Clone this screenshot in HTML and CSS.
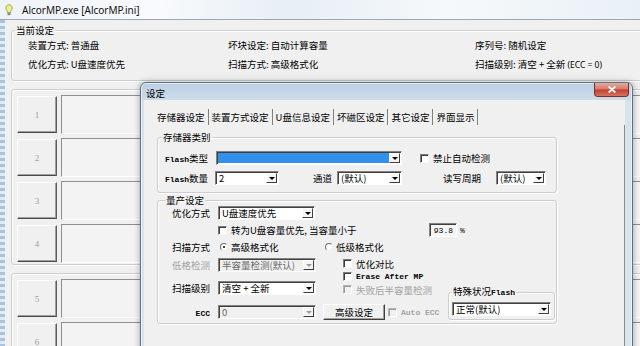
FILE: index.html
```html
<!DOCTYPE html>
<html lang="zh-CN">
<head>
<meta charset="utf-8">
<title>AlcorMP.exe [AlcorMP.ini]</title>
<link rel="stylesheet" href="styles.css">
</head>
<body>
<div class="screen">
  <div class="app">
    <div class="app-title">
      <svg class="bulb" width="8" height="12" viewBox="0 0 8 12" aria-hidden="true">
        <path d="M4 0.8C2 0.8 0.8 2.3 0.8 4c0 1.4 0.9 2.2 1.5 3.2V8.5h3.4V7.2C6.3 6.2 7.2 5.4 7.2 4 7.2 2.3 6 0.8 4 0.8z" fill="#f2ef86" stroke="#8a9a3a" stroke-width="0.8"/>
        <rect x="2.5" y="9" width="3" height="2.2" fill="#7d8a94"/>
      </svg>
      <span class="app-name">AlcorMP.exe [AlcorMP.ini]</span>
    </div>
    <div class="app-body">
      <div class="app-frame"></div>
      <div class="app-client">
        <fieldset class="group current">
          <legend>当前设定</legend>
          <div class="info-grid">
            <span>装置方式: 普通盘</span>
            <span>坏块设定: 自动计算容量</span>
            <span>序列号: 随机设定</span>
            <span>优化方式: U盘速度优先</span>
            <span>扫描方式: 高级格式化</span>
            <span>扫描级别: 清空 + 全新 <span class="latin-s">(ECC = 0)</span></span>
          </div>
        </fieldset>
        <div class="slot-group">
          <div class="slot"><div class="slot-btn">1</div><div class="slot-panel"></div></div>
          <div class="slot"><div class="slot-btn">2</div><div class="slot-panel"></div></div>
          <div class="slot"><div class="slot-btn">3</div><div class="slot-panel"></div></div>
          <div class="slot"><div class="slot-btn">4</div><div class="slot-panel"></div></div>
        </div>
        <div class="slot-group">
          <div class="slot"><div class="slot-btn">5</div><div class="slot-panel"></div></div>
          <div class="slot"><div class="slot-btn">6</div><div class="slot-panel"></div></div>
        </div>
      </div>
    </div>
  </div>

  <div class="dialog">
    <div class="dlg-title">
      <span class="dlg-name">设定</span>
      <div class="close"><svg width="8" height="7" viewBox="0 0 8 7" aria-hidden="true"><path d="M1.2 1L6.8 6M6.8 1L1.2 6" stroke="#fff" stroke-width="1.7" stroke-linecap="round"/></svg></div>
    </div>
    <div class="dlg-client">
      <div class="tabs">
        <span class="tab">存储器设定</span>
        <span class="tab">装置方式设定</span>
        <span class="tab">U盘信息设定</span>
        <span class="tab">坏磁区设定</span>
        <span class="tab">其它设定</span>
        <span class="tab">界面显示</span>
      </div>
      <div class="tab-page">
        <fieldset class="group mem">
          <legend>存储器类别</legend>
          <div class="mem-body">
            <div class="row">
              <span class="lbl w51"><span class="mono">Flash</span>类型</span>
              <div class="combo w186 sel"><span class="combo-text"></span><span class="combo-btn"></span></div>
              <div class="check ml18"><span class="box"></span>禁止自动检测</div>
            </div>
            <div class="row">
              <span class="lbl w50"><span class="mono">Flash</span>数量</span>
              <div class="combo w64"><span class="combo-text">2</span><span class="combo-btn"></span></div>
              <span class="lbl w24 ml34">通道</span>
              <div class="combo w65"><span class="combo-text">(默认)</span><span class="combo-btn"></span></div>
              <span class="lbl w53 ml41">读写周期</span>
              <div class="combo w50"><span class="combo-text">(默认)</span><span class="combo-btn"></span></div>
            </div>
          </div>
        </fieldset>

        <fieldset class="group prod">
          <legend>量产设定</legend>
          <div class="prod-body">
            <div class="row">
              <span class="plbl">优化方式</span>
              <div class="combo w97"><span class="combo-text">U盘速度优先</span><span class="combo-btn"></span></div>
            </div>
            <div class="row mt3">
              <div class="check w211 ml53"><span class="box"></span>转为U盘容量优先, 当容量小于</div>
              <span class="edit"><span class="mono thin">93.8</span></span>
              <span class="mono thin pct">%</span>
            </div>
            <div class="row mt3">
              <span class="plbl">扫描方式</span>
              <div class="radio-item w105"><span class="radio on"></span>高级格式化</div>
              <div class="radio-item"><span class="radio"></span>低级格式化</div>
            </div>
            <div class="lower">
              <div class="lower-left">
                <div class="block-a">
                  <div class="a-combos">
                    <div class="row">
                      <span class="plbl dis">低格检测</span>
                      <div class="combo w98 dis"><span class="combo-text">半容量检测(默认)</span><span class="combo-btn"></span></div>
                    </div>
                    <div class="row">
                      <span class="plbl">扫描级别</span>
                      <div class="combo w98"><span class="combo-text">清空 + 全新</span><span class="combo-btn"></span></div>
                    </div>
                  </div>
                  <div class="a-checks">
                    <div class="check"><span class="box"></span>优化对比</div>
                    <div class="check"><span class="box"></span><span class="mono">Erase After MP</span></div>
                    <div class="check dis"><span class="box"></span>失败后半容量检测</div>
                  </div>
                </div>
                <div class="block-b">
                  <span class="plbl"><span class="mono">ECC</span></span>
                  <div class="combo w98 dis"><span class="combo-text">0</span><span class="combo-btn"></span></div>
                  <div class="btn">高级设定</div>
                  <div class="check dis ml3"><span class="box"></span><span class="mono">Auto ECC</span></div>
                </div>
              </div>
              <fieldset class="group special">
                <legend>特殊状况<span class="mono">Flash</span></legend>
                <div class="combo w99"><span class="combo-text">正常(默认)</span><span class="combo-btn"></span></div>
              </fieldset>
            </div>
          </div>
        </fieldset>
      </div>
    </div>
  </div>
</div>
</body>
</html>
```

FILE: styles.css
```css
* { box-sizing: border-box; }
html, body { margin: 0; padding: 0; }
body {
  width: 640px;
  height: 346px;
  overflow: hidden;
  background: #f0f0f0;
  font-family: "Noto Sans CJK SC", "Noto Sans", sans-serif;
  font-size: 9.5px;
  color: #000;
}
.screen { position: relative; width: 640px; height: 346px; overflow: hidden; }

/* main window */
.app { display: flex; flex-direction: column; width: 640px; height: 346px; }
.app-title {
  flex: none;
  height: 19px;
  display: flex;
  align-items: center;
  gap: 9px;
  padding-left: 5px;
  background: linear-gradient(100deg, #eef3f8 0%, #f8fafc 25%, #e7eef5 45%, #f6f9fb 70%, #e9f0f6 100%);
  font-family: "Noto Sans", "Open Sans", sans-serif;
  font-size: 10px;
  color: #111;
}
.bulb { display: block; }
.app-body { flex: 1; min-height: 0; display: flex; border-top: 1px solid #9ea7b0; }
.app-frame {
  width: 5px;
  flex: none;
  background: repeating-linear-gradient(180deg, #aac4df 0 3px, #e3ebf3 3px 6px);
}
.app-client { flex: 1; min-width: 0; background: #f0f0f0; padding: 4px 0 0 6px; overflow: hidden; }

fieldset.group {
  margin: 0;
  padding: 0;
  min-width: 0;
  border: 1px solid #cdcdcd;
  border-radius: 3px;
  box-shadow: inset 1px 1px 0 #fff, 1px 1px 0 #fff;
}
fieldset.group > legend { padding: 0 1px; line-height: 12px; white-space: nowrap; }

fieldset.group.current { margin-right: -40px; }
.current > legend { margin-left: 3px; }
.info-grid {
  display: grid;
  grid-template-columns: 200px 247px auto;
  row-gap: 3px;
  line-height: 16px;
  padding: 1px 0 7px 16px;
  white-space: nowrap;
}
.latin-s { font-family: "Noto Sans", sans-serif; font-size: 8.5px; }

.slot-group {
  margin: 8px -40px 0 0;
  border: 1px solid #cdcdcd;
  border-radius: 3px;
  box-shadow: inset 1px 1px 0 #fff, 1px 1px 0 #fff;
  padding: 5px 0 1px 5px;
  display: flex;
  flex-direction: column;
  gap: 4px;
}
.slot { display: flex; gap: 4px; height: 39px; flex: none; }
.slot-btn {
  width: 40px;
  height: 37px;
  margin-top: 1px;
  flex: none;
  display: flex;
  align-items: center;
  justify-content: center;
  background: #f0f0f0;
  border: 1px solid;
  border-color: #fff #5e5e5e #4a4a4a #fff;
  box-shadow: inset -1px -1px 0 #a0a0a0;
  color: #a0a0a0;
  font-family: "Liberation Serif", serif;
  font-size: 9px;
}
.slot-panel {
  flex: 1;
  border: 1px solid;
  border-color: #8e8e8e #fff #fff #8e8e8e;
  background: #f3f3f3;
}

/* dialog */
.dialog {
  position: absolute;
  left: 140px;
  top: 82px;
  width: 493px;
  height: 290px;
  display: flex;
  flex-direction: column;
  border: 1px solid #5f7185;
  border-radius: 6px 6px 0 0;
  background: linear-gradient(180deg, #bccfe2 0, #cddbe9 17px, #d6e2ee 18px, #d8e4ef 100%);
  box-shadow: 0 0 6px rgba(0, 0, 0, .35), inset 0 0 0 1px rgba(255, 255, 255, .55);
}
.dlg-title { flex: none; height: 17px; display: flex; align-items: flex-start; padding-left: 5px; }
.dlg-name { margin-top: 4px; line-height: 12px; }
.close {
  margin-left: auto;
  margin-right: 3px;
  width: 35px;
  height: 14px;
  display: flex;
  align-items: center;
  justify-content: center;
  border: 1px solid #7a2f26;
  border-top: 0;
  border-radius: 0 0 4px 4px;
  background: linear-gradient(180deg, #e6ac9c 0, #d47d6b 45%, #c2412f 55%, #d8735f 100%);
}
.close svg { display: block; }
.dlg-client {
  flex: 1;
  margin: 0 7px 0 3px;
  background: #f0f0f0;
  display: flex;
  flex-direction: column;
  padding-top: 9px;
}
.tabs { flex: none; display: flex; height: 16px; line-height: 16px; padding-left: 10px; }
.tab { padding: 0 3px; border-right: 1px solid #808080; white-space: nowrap; }
.tab-page {
  flex: 1;
  padding: 6px 0 0 13px;
  border-right: 1px solid #8b8b8b;
}

fieldset.mem, fieldset.prod { width: 400px; }
.mem > legend { margin-left: 4px; }
.mem-body { padding: 8px 0 7px 7px; display: flex; flex-direction: column; gap: 6px; }
fieldset.prod { margin-top: 1px; }
.prod > legend { margin-left: 7px; }
.prod-body { padding: 0 0 3px 7px; }

.row { display: flex; align-items: center; height: 14px; flex: none; white-space: nowrap; }
.mt3 { margin-top: 3px; }
.ml3 { margin-left: 3px; }
.ml18 { margin-left: 18px; }
.ml34 { margin-left: 34px; }
.ml41 { margin-left: 41px; }
.ml53 { margin-left: 53px; }
.w24 { width: 24px; }
.w50 { width: 50px; }
.w51 { width: 51px; }
.w53 { width: 53px; }
.w64 { width: 64px; }
.w65 { width: 65px; }
.w97 { width: 97px; }
.w98 { width: 98px; }
.w99 { width: 99px; }
.w105 { width: 105px; }
.w186 { width: 186px; }
.w211 { width: 211px; }

.mono { font-family: "Liberation Mono", monospace; font-weight: bold; font-size: 8px; }
.mono.thin { font-weight: normal; }
.lbl { flex: none; white-space: nowrap; }
.plbl { width: 45px; margin-right: 8px; text-align: right; flex: none; white-space: nowrap; }
.dis { color: #a3a3a3; }

.combo {
  display: flex;
  height: 14px;
  flex: none;
  border: 1px solid;
  border-color: #828282 #fdfdfd #fdfdfd #828282;
  box-shadow: inset 1px 1px 0 #404040;
  background: #fff;
}
.combo-text { flex: 1; padding-left: 3px; line-height: 12px; overflow: hidden; white-space: nowrap; }
.combo-btn {
  width: 11px;
  flex: none;
  display: flex;
  align-items: center;
  justify-content: center;
  background: #f4f4f4;
  border: 1px solid;
  border-color: #fff #3f3f3f #3f3f3f #fff;
  margin: 1px 1px 1px 0;
}
.combo-btn::after {
  content: "";
  border-left: 3px solid transparent;
  border-right: 3px solid transparent;
  border-top: 3px solid #000;
}
.combo.sel .combo-text { background: #3390ea; margin: 1px 0 1px 1px; }
.combo.dis { background: #f0f0f0; color: #6a6a6a; }
.combo.dis .combo-btn::after { border-top-color: #9d9d9d; }

.check { display: flex; align-items: center; gap: 4px; flex: none; white-space: nowrap; }
.box {
  width: 9px;
  height: 9px;
  flex: none;
  background: #fff;
  border: 1px solid;
  border-color: #7c7c7c #fafafa #fafafa #7c7c7c;
  box-shadow: inset 1px 1px 0 #3c3c3c;
}
.check.dis .box {
  background: #f0f0f0;
  border-color: #b5b5b5 #fff #fff #b5b5b5;
  box-shadow: inset 1px 1px 0 #9a9a9a;
}

.radio-item { display: flex; align-items: center; gap: 3px; flex: none; margin-left: 2px; }
.radio-item + .radio-item { margin-left: 0; }
.radio {
  position: relative;
  width: 8px;
  height: 8px;
  flex: none;
  border-radius: 50%;
  border: 1px solid;
  border-color: #6f6f6f #ececec #ececec #6f6f6f;
  background: #fff;
}
.radio.on::after {
  content: "";
  position: absolute;
  left: 2px;
  top: 2px;
  width: 2px;
  height: 2px;
  border-radius: 50%;
  background: #000;
}

.edit {
  width: 28px;
  height: 14px;
  flex: none;
  display: flex;
  align-items: center;
  justify-content: flex-end;
  padding-right: 3px;
  border: 1px solid;
  border-color: #828282 #fff #fff #828282;
  box-shadow: inset 1px 1px 0 #404040;
  background: #f4f4f4;
}
.pct { margin-left: 3px; }

.lower { display: flex; align-items: flex-end; margin-top: 3px; }
.lower-left { width: 283px; flex: none; }
.block-a { display: flex; }
.a-combos { width: 178px; flex: none; }
.a-combos .row:first-child { margin-top: 1px; }
.a-combos .row + .row { margin-top: 9px; }
.a-checks .check { height: 13px; }
.block-b { display: flex; align-items: center; height: 16px; margin-top: 8px; }
.btn {
  width: 62px;
  height: 16px;
  margin-left: 7px;
  flex: none;
  display: flex;
  align-items: center;
  justify-content: center;
  background: #f0f0f0;
  border: 1px solid;
  border-color: #fff #404040 #404040 #fff;
  box-shadow: inset -1px -1px 0 #a0a0a0;
}
fieldset.special { width: 107px; }
.special > legend { margin-left: 3px; }
.special .combo { margin: 3px 0 3px 3px; }
```
